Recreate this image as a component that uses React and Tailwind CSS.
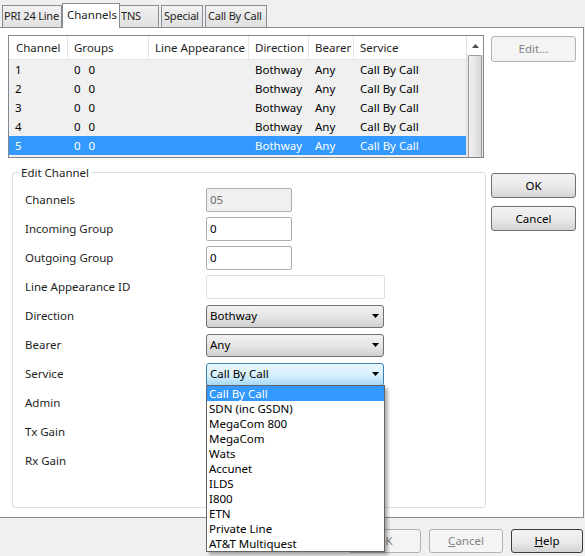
import React from "react";

const font = { fontFamily: '"Noto Sans", "Open Sans", sans-serif' };

const rows = [1, 2, 3, 4, 5];

const serviceOptions = [
  "Call By Call",
  "SDN (inc GSDN)",
  "MegaCom 800",
  "MegaCom",
  "Wats",
  "Accunet",
  "ILDS",
  "I800",
  "ETN",
  "Private Line",
  "AT&T Multiquest",
];

function Arrow() {
  return (
    <svg width="7" height="4" viewBox="0 0 7 4" className="mr-[4px]">
      <path d="M0 0 H7 L3.5 4 Z" fill="#000" />
    </svg>
  );
}

function Select({ value, focused }) {
  return (
    <div
      className={`w-[178px] h-[23px] rounded-[3px] border flex items-center justify-between pl-[3px] ${
        focused
          ? "border-[#3c7fb1] bg-gradient-to-b from-[#eaf6fd] via-[#d9f0fc] to-[#a7d9f5]"
          : "border-[#707070] bg-gradient-to-b from-[#f2f2f2] via-[#e6e6e6] to-[#d0d0d0]"
      }`}
    >
      <span className="text-black">{value}</span>
      <Arrow />
    </div>
  );
}

function Button({ children, disabled, isDefault, className = "" }) {
  return (
    <div
      className={`rounded-[3px] border flex items-center justify-center ${
        disabled
          ? "border-[#adb2b5] bg-[#f4f4f4] text-[#838383]"
          : isDefault
          ? "border-[#3c3c3c] bg-gradient-to-b from-[#f2f2f2] via-[#ebebeb] to-[#d4d4d4] text-black"
          : "border-[#707070] bg-gradient-to-b from-[#f2f2f2] via-[#ebebeb] to-[#d4d4d4] text-black"
      } ${className}`}
    >
      {children}
    </div>
  );
}

function Field({ label, children }) {
  return (
    <div className="flex items-center h-[24px]">
      <span className="w-[181px]">{label}</span>
      {children}
    </div>
  );
}

const tabCls =
  "h-[22px] flex items-center text-[11px] tracking-[-0.2px] border border-b-0 border-[#898c95] bg-gradient-to-b from-[#f2f2f2] to-[#e0e0e0]";

export default function App() {
  return (
    <div
      className="relative w-[585px] h-[556px] bg-[#f0f0f0] overflow-hidden text-[11.5px] text-[#1e1e1e] whitespace-nowrap"
      style={font}
    >
      {/* Tabs */}
      <div className="flex items-end h-[27px] pl-[2px] relative z-10">
        <div className={`${tabCls} w-[60px] pl-[1px]`}>PRI 24 Line</div>
        <div className="h-[25px] -mb-px w-[58px] pl-[4px] flex items-start pt-[2px] border border-b-0 border-[#898c95] bg-white">
          Channels
        </div>
        <div className={`${tabCls} w-[39px] pl-[1px] border-l-0`}>TNS</div>
        <div className={`${tabCls} ml-[2px] w-[42px] pl-[2px]`}>Special</div>
        <div className={`${tabCls} ml-[2px] w-[62px] pl-[2px]`}>Call By Call</div>
      </div>

      {/* Panel */}
      <div className="w-[584px] h-[491px] bg-white border-t border-r border-b border-[#898c95] flex">
        <div className="ml-[8px] w-[478px] flex flex-col">
          {/* List */}
          <div className="mt-[7px] w-[476px] h-[123px] border border-[#828790] flex bg-[#f0f0f0]">
            <div className="flex-1 flex flex-col">
              <div className="h-[24px] bg-white border-b border-[#e5e5e5] flex items-center">
                <div className="w-[59px] h-full pl-[7px] flex items-center border-r border-[#e5e5e5]">Channel</div>
                <div className="w-[81px] h-full pl-[6px] flex items-center border-r border-[#e5e5e5]">Groups</div>
                <div className="w-[100px] h-full pl-[6px] flex items-center border-r border-[#e5e5e5]">Line Appearance</div>
                <div className="w-[60px] h-full pl-[6px] flex items-center border-r border-[#e5e5e5]">Direction</div>
                <div className="w-[45px] h-full pl-[6px] flex items-center border-r border-[#e5e5e5]">Bearer</div>
                <div className="flex-1 h-full pl-[6px] flex items-center">Service</div>
              </div>
              {rows.map((n) => (
                <div
                  key={n}
                  className={`h-[19px] flex items-center ${
                    n === 5 ? "bg-[#3399ff] text-white" : "text-black"
                  }`}
                >
                  <div className="w-[59px] pl-[6px]">{n}</div>
                  <div className="w-[81px] pl-[6px]">
                    0<span className="ml-[8px]">0</span>
                  </div>
                  <div className="w-[100px]"></div>
                  <div className="w-[60px] pl-[6px]">Bothway</div>
                  <div className="w-[45px] pl-[6px]">Any</div>
                  <div className="flex-1 pl-[6px]">Call By Call</div>
                </div>
              ))}
            </div>
            {/* Scrollbar */}
            <div className="w-[17px] flex flex-col bg-[#e8e8e8] border-l border-[#e0e0e0]">
              <div className="h-[19px] bg-white flex items-center justify-center">
                <svg width="7" height="4" viewBox="0 0 7 4">
                  <path d="M0 4 H7 L3.5 0 Z" fill="#4d4d4d" />
                </svg>
              </div>
              <div className="flex-1 mx-[1px] rounded-t-[2px] border border-b-0 border-[#9a9a9a] bg-gradient-to-r from-[#f0f0f0] via-[#e6e6e6] to-[#d6d6d6]"></div>
            </div>
          </div>

          {/* Edit Channel group */}
          <div className="relative mt-[14px] ml-[4px] w-[474px] h-[336px] border border-[#d5dfe5] rounded-[3px] pt-[15px] pl-[12px] flex flex-col gap-[5px]">
            <span className="absolute -top-[9px] left-[6px] bg-white px-[2px]">Edit Channel</span>
            <Field label="Channels">
              <div className="w-[86px] h-[24px] border border-[#abadb3] rounded-[2px] bg-[#f0f0f0] text-[#6d6d6d] flex items-center pl-[3px]">
                05
              </div>
            </Field>
            <Field label="Incoming Group">
              <div className="w-[86px] h-[24px] border border-[#abadb3] rounded-[2px] bg-white text-black flex items-center pl-[3px]">
                0
              </div>
            </Field>
            <Field label="Outgoing Group">
              <div className="w-[86px] h-[24px] border border-[#abadb3] rounded-[2px] bg-white text-black flex items-center pl-[3px]">
                0
              </div>
            </Field>
            <Field label="Line Appearance ID">
              <div className="w-[179px] h-[24px] border border-[#dbdfe6] rounded-[2px] bg-white"></div>
            </Field>
            <Field label="Direction">
              <Select value="Bothway" />
            </Field>
            <Field label="Bearer">
              <Select value="Any" />
            </Field>
            <Field label="Service">
              <Select value="Call By Call" focused />
            </Field>
            <Field label="Admin" />
            <Field label="Tx Gain" />
            <Field label="Rx Gain" />
          </div>
        </div>

        {/* Right buttons */}
        <div className="ml-[5px] flex flex-col">
          <Button disabled className="mt-[8px] w-[85px] h-[26px]">Edit...</Button>
          <Button className="mt-[111px] w-[85px] h-[25px]">OK</Button>
          <Button className="mt-[8px] w-[85px] h-[25px]">Cancel</Button>
        </div>
      </div>

      {/* Bottom buttons */}
      <div className="flex justify-end gap-[8px] pr-[2px] mt-[11px]">
        <Button disabled className="w-[73px] h-[24px]">OK</Button>
        <Button disabled className="w-[74px] h-[24px]">
          <span><span className="underline">C</span>ancel</span>
        </Button>
        <Button isDefault className="w-[72px] h-[24px]">
          <span><span className="underline">H</span>elp</span>
        </Button>
      </div>

      {/* Open dropdown list */}
      <div className="absolute left-[206px] top-[385px] w-[179px] border border-[#646464] bg-white shadow-[3px_3px_3px_rgba(0,0,0,0.3)] z-20">
        {serviceOptions.map((opt, i) => (
          <div
            key={opt}
            className={`h-[15px] leading-[15px] pl-[2px] ${
              i === 0 ? "bg-[#3399ff] text-white" : "text-black"
            }`}
          >
            {opt}
          </div>
        ))}
      </div>
    </div>
  );
}
